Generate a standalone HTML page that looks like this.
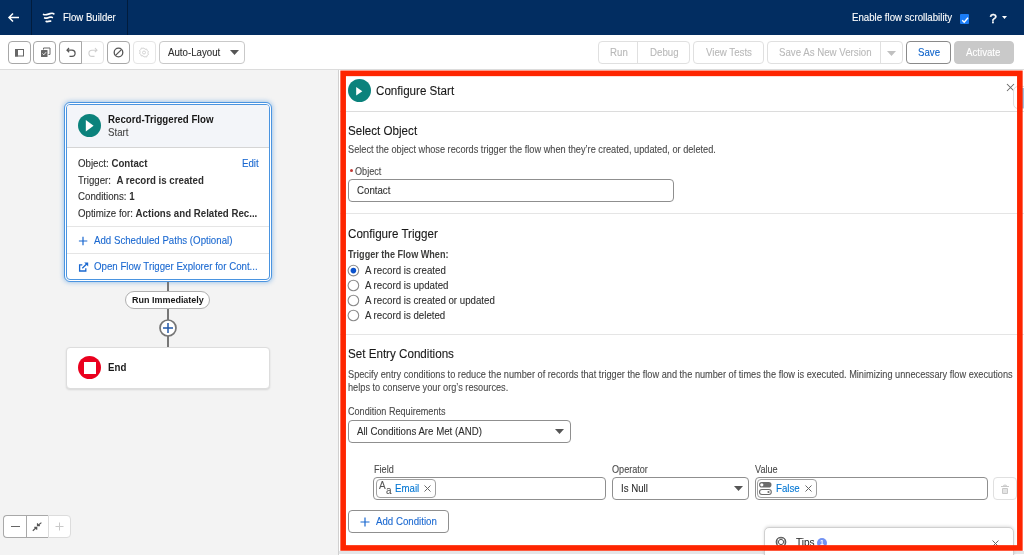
<!DOCTYPE html>
<html><head><meta charset="utf-8">
<style>
*{box-sizing:border-box;margin:0;padding:0}
html,body{width:1024px;height:555px;overflow:hidden;background:#fff;font-family:"Liberation Sans",sans-serif;color:#181818;-webkit-font-smoothing:antialiased}
body{will-change:transform}
.t{-webkit-text-stroke:0.1px currentColor}
b{-webkit-text-stroke:0}
.h{font-size:12.3px!important;transform:scaleX(0.945);transform-origin:0 0}
.a{position:absolute}
.t{position:absolute;white-space:nowrap;line-height:1}
#hdr{left:0;top:0;width:1024px;height:35px;background:#022d61}
#tb{left:0;top:35px;width:1024px;height:35px;background:#fff;border-bottom:1px solid #dcdcdc}
#canvas{left:0;top:70px;width:339px;height:485px;background:#f3f3f3}
#panel{left:338px;top:70px;width:686px;height:485px;background:#fff;border-left:1px solid #d0d0d0}
.btn{position:absolute;top:41px;height:23px;border:1px solid #c9c9c9;border-radius:4px;background:#fff}
.red{position:absolute;left:341px;top:71px;width:681px;height:479px;border:5px solid #fe2500}
.lbl{font-size:9.7px}
.link{color:#1a68d0}
.radio{position:absolute;width:11px;height:11px;border:1px solid #8a8a8a;border-radius:50%;background:#fff}
.inp{position:absolute;border:1px solid #8f8f8f;border-radius:4px;background:#fff;height:22px}
</style></head><body>
<!-- HEADER -->
<div id="hdr" class="a">
  <div class="a" style="left:31px;top:0;width:1px;height:35px;background:#011c3d"></div>
  <div class="a" style="left:127px;top:0;width:1px;height:35px;background:#011c3d"></div>
  <svg class="a" style="left:7px;top:12px" width="13" height="11" viewBox="0 0 13 11"><path d="M12 5.5H2.2M6 1.5L2 5.5l4 4" stroke="#fff" stroke-width="1.5" fill="none"/></svg>
  <svg class="a" style="left:42px;top:10px" width="14" height="14" viewBox="0 0 14 14"><path d="M1.6 4.4C3.5 5.4 5.5 4.3 8 3.6C9.8 3.1 11 3 11.8 3.9M2.7 8C4.5 8.7 6 7.6 7.8 7.2C9 6.9 9.8 7 10.3 7.5M4.2 11.4C5.6 11.9 6.8 11 8.6 11.2" stroke="#fff" stroke-width="1.7" fill="none" stroke-linecap="round"/></svg>
  <div class="t" style="left:63px;top:13px;font-size:10.08px;color:#fff;transform:scaleX(0.952);transform-origin:0 0">Flow Builder</div>
  <div class="t" style="left:852px;top:12.7px;font-size:10.19px;color:#fff;transform:scaleX(0.952);transform-origin:0 0">Enable flow scrollability</div>
  <div class="a" style="left:960px;top:14px;width:9px;height:10px;background:#1a7cf6;border-radius:1px"></div>
  <svg class="a" style="left:959.5px;top:14.5px" width="10" height="10" viewBox="0 0 10 10"><path d="M2.2 5.2L4.2 7.2 8 2.8" stroke="#fff" stroke-width="1.4" fill="none"/></svg>
  <div class="t" style="left:989.5px;top:11.5px;font-size:13px;color:#fff;-webkit-text-stroke:0.45px #fff">?</div>
  <svg class="a" style="left:1002px;top:16px" width="5" height="3" viewBox="0 0 5 3"><path d="M0 0h5L2.5 3z" fill="#fff"/></svg>
</div>
<!-- TOOLBAR -->
<div id="tb" class="a"></div>
<div class="btn" style="left:8px;width:23px;border-color:#a8a8a8"></div>
<svg class="a" style="left:14px;top:48px" width="11" height="10" viewBox="0 0 11 10"><rect x="1.5" y="1.5" width="8" height="6.5" stroke="#666" stroke-width="1" fill="#fff"/><rect x="1" y="1" width="3" height="7.5" fill="#666"/></svg>
<div class="btn" style="left:33px;width:23px;border-color:#a8a8a8"></div>
<svg class="a" style="left:40px;top:47px" width="11" height="11" viewBox="0 0 11 11"><path d="M3.5 2.5V1h6.5v6.5H8.5" stroke="#666" stroke-width="1" fill="none"/><rect x="1" y="3" width="6.5" height="7" rx="0.5" fill="#666"/><path d="M2.5 6.5l1.3 1.3 2.3-2.6" stroke="#fff" stroke-width="0.9" fill="none"/></svg>
<div class="btn" style="left:59px;width:45px;border-color:#e3e3e3"></div>
<div class="a" style="left:59px;top:41px;width:23px;height:23px;border:1px solid #a8a8a8;border-radius:4px 0 0 4px"></div>
<svg class="a" style="left:66px;top:47px" width="11" height="11" viewBox="0 0 11 11"><path d="M3 1L1 3.2 3.2 5.2M1.2 3.2H6a3 3 0 0 1 0 6.2H3.5" stroke="#555" stroke-width="1.2" fill="none"/></svg>
<svg class="a" style="left:87px;top:47px" width="11" height="11" viewBox="0 0 11 11"><path d="M8 1l2 2.2L7.8 5.2M9.8 3.2H5a3 3 0 0 0 0 6.2h2.5" stroke="#cfcfcf" stroke-width="1.1" fill="none"/></svg>
<div class="btn" style="left:107px;width:23px;border-color:#a8a8a8"></div>
<svg class="a" style="left:113px;top:47px" width="11" height="11" viewBox="0 0 11 11"><circle cx="5.5" cy="5.5" r="4.3" stroke="#555" stroke-width="1.3" fill="none"/><path d="M2.6 8.4L8.4 2.6" stroke="#555" stroke-width="1.3"/></svg>
<div class="btn" style="left:133px;width:23px;border-color:#e5e5e5"></div>
<svg class="a" style="left:139px;top:47px" width="10" height="11" viewBox="0 0 10 11"><path d="M5 1l1 1.3 1.7-.3.4 1.6 1.4.9-.7 1.5.7 1.5-1.4.9-.4 1.6-1.7-.3L5 10l-1-1.3-1.7.3-.4-1.6-1.4-.9.7-1.5-.7-1.5 1.4-.9.4-1.6 1.7.3z" stroke="#cfcfcf" stroke-width="0.9" fill="none"/><circle cx="5" cy="5.5" r="1.5" stroke="#cfcfcf" stroke-width="0.9" fill="none"/></svg>
<div class="btn" style="left:159px;width:86px"></div>
<div class="t" style="left:168px;top:48.2px;font-size:10.19px;color:#2e2e2e;transform:scaleX(0.952);transform-origin:0 0">Auto-Layout</div>
<svg class="a" style="left:230px;top:50px" width="9" height="5" viewBox="0 0 9 5"><path d="M0 0h9L4.5 5z" fill="#555"/></svg>
<!-- right toolbar -->
<div class="btn" style="left:598px;width:92px;border-color:#e0e0e0"></div>
<div class="a" style="left:637px;top:41px;width:1px;height:23px;background:#e0e0e0"></div>
<div class="t" style="left:610px;top:48.2px;font-size:10.19px;color:#b8b8b8;transform:scaleX(0.952);transform-origin:0 0">Run</div>
<div class="t" style="left:650px;top:48.2px;font-size:10.19px;color:#b8b8b8;transform:scaleX(0.952);transform-origin:0 0">Debug</div>
<div class="btn" style="left:693px;width:71px;border-color:#e0e0e0"></div>
<div class="t" style="left:706px;top:48.2px;font-size:10.19px;color:#b8b8b8;transform:scaleX(0.952);transform-origin:0 0">View Tests</div>
<div class="btn" style="left:767px;width:136px;border-color:#e0e0e0"></div>
<div class="a" style="left:880px;top:41px;width:1px;height:23px;background:#e0e0e0"></div>
<div class="t" style="left:779px;top:48.2px;font-size:10.19px;color:#b8b8b8;transform:scaleX(0.952);transform-origin:0 0">Save As New Version</div>
<svg class="a" style="left:887px;top:51px" width="9" height="5" viewBox="0 0 9 5"><path d="M0 0h9L4.5 5z" fill="#c0c0c0"/></svg>
<div class="btn" style="left:906px;width:45px;border-color:#8a8a8a"></div>
<div class="t" style="left:918px;top:48.2px;font-size:10.19px;color:#0d62c9;transform:scaleX(0.952);transform-origin:0 0">Save</div>
<div class="btn" style="left:954px;width:60px;border-color:#c9c9c9;background:#c9c9c9"></div>
<div class="t" style="left:966px;top:48.2px;font-size:10.19px;color:#fff;transform:scaleX(0.952);transform-origin:0 0">Activate</div>
<!-- CANVAS -->
<div id="canvas" class="a"></div>
<!-- start card -->
<div class="a" style="left:64px;top:102px;width:208px;height:180px;border:1px solid #4a94e0;border-radius:6px;background:#fff;box-shadow:0 0 4px 1px rgba(74,148,224,.45)"></div>
<div class="a" style="left:66px;top:104px;width:204px;height:176px;border:1px solid #4a94e0;border-radius:4px;background:#fff;overflow:hidden">
  <div class="a" style="left:0;top:0;width:202px;height:43px;background:#f3f5f9;border-bottom:1px solid #d5d5d5"></div>
  <div class="a" style="left:0;top:121px;width:202px;height:1px;background:#e5e5e5"></div>
  <div class="a" style="left:0;top:148px;width:202px;height:1px;background:#e5e5e5"></div>
</div>
<div class="a" style="left:78px;top:114px;width:23px;height:23px;border-radius:50%;background:#0b827c"></div>
<svg class="a" style="left:78px;top:114px" width="23" height="23" viewBox="0 0 23 23"><path d="M7.8 6L15.6 11.8 7.8 17.6z" fill="#fff"/></svg>
<div class="t" style="left:108px;top:114.18px;font-size:10.67px;font-weight:bold;color:#181818;transform:scaleX(0.9091);transform-origin:0 0;-webkit-text-stroke:0">Record-Triggered Flow</div>
<div class="t" style="left:108px;top:127.18px;font-size:10.67px;color:#444;transform:scaleX(0.9091);transform-origin:0 0">Start</div>
<div class="t" style="left:78px;top:158.18px;font-size:10.67px;color:#2e2e2e;transform:scaleX(0.9091);transform-origin:0 0">Object: <b>Contact</b></div>
<div class="t" style="left:242px;top:158.18px;font-size:10.67px;color:#1a68d0;transform:scaleX(0.9091);transform-origin:0 0">Edit</div>
<div class="t" style="left:78px;top:175.18px;font-size:10.67px;color:#2e2e2e;transform:scaleX(0.9091);transform-origin:0 0">Trigger:&nbsp; <b>A record is created</b></div>
<div class="t" style="left:78px;top:191.18px;font-size:10.67px;color:#2e2e2e;transform:scaleX(0.9091);transform-origin:0 0">Conditions: <b>1</b></div>
<div class="t" style="left:78px;top:208.18px;font-size:10.67px;color:#2e2e2e;transform:scaleX(0.9091);transform-origin:0 0">Optimize for: <b>Actions and Related Rec...</b></div>
<svg class="a" style="left:78px;top:236px" width="10" height="10" viewBox="0 0 10 10"><path d="M5 0.7v8.6M0.9 5h8.4" stroke="#1a68d0" stroke-width="1.2"/></svg>
<div class="t" style="left:94px;top:235.18px;font-size:10.67px;color:#1a68d0;transform:scaleX(0.9091);transform-origin:0 0">Add Scheduled Paths (Optional)</div>
<svg class="a" style="left:78px;top:261px" width="11" height="11" viewBox="0 0 11 11"><path d="M4.3 3.8H1.6V10H7.8V7.2" stroke="#1a68d0" stroke-width="1.3" fill="none"/><path d="M4.3 7.3L8.6 3" stroke="#1a68d0" stroke-width="1.3"/><path d="M6.2 1.4H10.2V5.4z" fill="#1a68d0"/></svg>
<div class="t" style="left:94px;top:261.18px;font-size:10.67px;color:#1a68d0;transform:scaleX(0.9091);transform-origin:0 0">Open Flow Trigger Explorer for Cont...</div>
<!-- connector -->
<div class="a" style="left:167px;top:282px;width:2px;height:66px;background:#777"></div>
<div class="a" style="left:125px;top:291px;width:85px;height:18px;border:1px solid #b0b0b0;border-radius:9px;background:#fff"></div>
<div class="t" style="left:132px;top:295.24px;font-size:9.9px;font-weight:bold;color:#181818;transform:scaleX(0.9091);transform-origin:0 0;-webkit-text-stroke:0">Run Immediately</div>
<svg class="a" style="left:158px;top:318px" width="20" height="20" viewBox="0 0 20 20"><circle cx="10" cy="10" r="8" stroke="#757575" stroke-width="1.7" fill="#fff"/><path d="M10 5v10M5 10h10" stroke="#2358a8" stroke-width="1.5"/></svg>
<!-- end card -->
<div class="a" style="left:66px;top:347px;width:204px;height:42px;background:#fff;border-radius:4px;border:1px solid #dddddd;box-shadow:0 1px 2px rgba(0,0,0,.12)"></div>
<div class="a" style="left:78px;top:356px;width:23px;height:23px;border-radius:50%;background:#ea001e"></div>
<div class="a" style="left:84px;top:362px;width:12px;height:12px;background:#fff"></div>
<div class="t" style="left:108px;top:362.2px;font-size:10.67px;font-weight:bold;color:#181818;transform:scaleX(0.9091);transform-origin:0 0;-webkit-text-stroke:0">End</div>
<!-- zoom controls -->
<div class="a" style="left:48px;top:515px;width:23px;height:23px;border:1px solid #dcdcdc;border-radius:0 4px 4px 0;background:#fff"></div>
<div class="a" style="left:3px;top:515px;width:45px;height:23px;border:1px solid #a8a8a8;border-right:none;border-radius:4px 0 0 4px;background:#fff"></div>
<div class="a" style="left:26px;top:515px;width:1px;height:23px;background:#a8a8a8"></div>
<div class="a" style="left:11px;top:526px;width:9px;height:1.2px;background:#666"></div>
<svg class="a" style="left:32px;top:520px" width="12" height="12" viewBox="0 0 12 12"><path d="M0.8 10.8L4.7 7.3M2.3 7.3H4.7V9.7M9.4 2.6L5.5 5.7M5.5 3.3V5.7H7.9" stroke="#555" stroke-width="1.2" fill="none"/></svg>
<svg class="a" style="left:54px;top:521px" width="11" height="11" viewBox="0 0 11 11"><path d="M5.5 1.5v8M1.5 5.5h8" stroke="#c9c9c9" stroke-width="1"/></svg>
<!-- PANEL -->
<div id="panel" class="a"></div>
<div class="a" style="left:340px;top:111px;width:684px;height:1px;background:#dcdcdc"></div>
<div class="a" style="left:348px;top:79px;width:23px;height:23px;border-radius:50%;background:#0b827c"></div>
<svg class="a" style="left:348px;top:79px" width="23" height="23" viewBox="0 0 23 23"><path d="M8.2 8L14.3 12.2 8.2 16.5z" fill="#fff"/></svg>
<div class="t h" style="left:376px;top:85px;font-size:11.8px;color:#181818">Configure Start</div>
<svg class="a" style="left:1006px;top:83px" width="9" height="9" viewBox="0 0 9 9"><path d="M1 1l7 7M8 1L1 8" stroke="#666" stroke-width="1.05"/></svg>
<!-- Select Object -->
<div class="t h" style="left:348px;top:124.5px;font-size:11.6px;color:#181818">Select Object</div>
<div class="t" style="left:348px;top:145.22px;font-size:10.12px;color:#4a4a4a;transform:scaleX(0.9091);transform-origin:0 0">Select the object whose records trigger the flow when they’re created, updated, or deleted.</div>
<div class="a" style="left:350px;top:169px;width:3px;height:3px;border-radius:50%;background:#c23934"></div>
<div class="t" style="left:355px;top:167.23px;font-size:10.01px;color:#4a4a4a;transform:scaleX(0.9091);transform-origin:0 0">Object</div>
<div class="inp" style="left:348px;top:179px;width:326px;height:23px"></div>
<div class="t" style="left:357px;top:185.18px;font-size:10.67px;color:#2e2e2e;transform:scaleX(0.9091);transform-origin:0 0">Contact</div>
<div class="a" style="left:340px;top:213px;width:684px;height:1px;background:#e5e5e5"></div>
<!-- Configure Trigger -->
<div class="t h" style="left:348px;top:227.5px;font-size:11.6px;color:#181818">Configure Trigger</div>
<div class="t" style="left:348px;top:250.23px;font-size:10.01px;font-weight:bold;color:#3e3e3c;transform:scaleX(0.9091);transform-origin:0 0;-webkit-text-stroke:0">Trigger the Flow When:</div>
<svg class="a" style="left:346px;top:263px" width="16" height="16" viewBox="0 0 16 16"><circle cx="7.4" cy="7.6" r="5.3" stroke="#8c8c8c" stroke-width="1.1" fill="#fff"/><circle cx="7.4" cy="7.6" r="2.8" fill="#0b52cc"/></svg>
<div class="t" style="left:365px;top:265.18px;font-size:10.67px;color:#2e2e2e;transform:scaleX(0.9091);transform-origin:0 0">A record is created</div>
<svg class="a" style="left:346px;top:278px" width="16" height="16" viewBox="0 0 16 16"><circle cx="7.4" cy="7.5" r="5.3" stroke="#8c8c8c" stroke-width="1.1" fill="#fff"/></svg>
<div class="t" style="left:365px;top:280.18px;font-size:10.67px;color:#2e2e2e;transform:scaleX(0.9091);transform-origin:0 0">A record is updated</div>
<svg class="a" style="left:346px;top:293px" width="16" height="16" viewBox="0 0 16 16"><circle cx="7.4" cy="7.5" r="5.3" stroke="#8c8c8c" stroke-width="1.1" fill="#fff"/></svg>
<div class="t" style="left:365px;top:295.18px;font-size:10.67px;color:#2e2e2e;transform:scaleX(0.9091);transform-origin:0 0">A record is created or updated</div>
<svg class="a" style="left:346px;top:308px" width="16" height="16" viewBox="0 0 16 16"><circle cx="7.4" cy="7.5" r="5.3" stroke="#8c8c8c" stroke-width="1.1" fill="#fff"/></svg>
<div class="t" style="left:365px;top:310.18px;font-size:10.67px;color:#2e2e2e;transform:scaleX(0.9091);transform-origin:0 0">A record is deleted</div>
<div class="a" style="left:340px;top:334px;width:684px;height:1px;background:#e5e5e5"></div>
<!-- Set Entry Conditions -->
<div class="t h" style="left:348px;top:347.5px;font-size:11.6px;color:#181818">Set Entry Conditions</div>
<div class="t" style="left:348px;top:370.22px;font-size:10.12px;color:#4a4a4a;transform:scaleX(0.9091);transform-origin:0 0">Specify entry conditions to reduce the number of records that trigger the flow and the number of times the flow is executed. Minimizing unnecessary flow executions</div>
<div class="t" style="left:348px;top:383.22px;font-size:10.12px;color:#4a4a4a;transform:scaleX(0.9091);transform-origin:0 0">helps to conserve your org’s resources.</div>
<div class="t" style="left:348px;top:407.23px;font-size:10.01px;color:#4a4a4a;transform:scaleX(0.9091);transform-origin:0 0">Condition Requirements</div>
<div class="inp" style="left:348px;top:420px;width:223px;height:23px"></div>
<div class="t" style="left:357px;top:426.18px;font-size:10.67px;color:#2e2e2e;transform:scaleX(0.9091);transform-origin:0 0">All Conditions Are Met (AND)</div>
<svg class="a" style="left:555px;top:429px" width="9" height="5" viewBox="0 0 9 5"><path d="M0 0h9L4.5 5z" fill="#555"/></svg>
<!-- condition row -->
<div class="t" style="left:374px;top:465.23px;font-size:10.01px;color:#4a4a4a;transform:scaleX(0.9091);transform-origin:0 0">Field</div>
<div class="inp" style="left:373px;top:477px;width:233px;height:23px"></div>
<div class="a" style="left:376px;top:479px;width:60px;height:19px;border:1px solid #a0a0a0;border-radius:4px;background:#fff"></div>
<div class="t" style="left:379px;top:480.15px;font-size:11.0px;color:#555;transform:scaleX(0.9091);transform-origin:0 0">A</div>
<div class="t" style="left:386px;top:485.15px;font-size:11.0px;color:#555;transform:scaleX(0.9091);transform-origin:0 0">a</div>
<div class="t" style="left:395px;top:483.18px;font-size:10.67px;color:#0176d3;transform:scaleX(0.9091);transform-origin:0 0">Email</div>
<svg class="a" style="left:423px;top:484px" width="9" height="9" viewBox="0 0 9 9"><path d="M1.5 1.5l6 6M7.5 1.5l-6 6" stroke="#666" stroke-width="1"/></svg>
<div class="t" style="left:612px;top:465.23px;font-size:10.01px;color:#4a4a4a;transform:scaleX(0.9091);transform-origin:0 0">Operator</div>
<div class="inp" style="left:612px;top:477px;width:137px;height:23px"></div>
<div class="t" style="left:621px;top:483.18px;font-size:10.67px;color:#2e2e2e;transform:scaleX(0.9091);transform-origin:0 0">Is Null</div>
<svg class="a" style="left:734px;top:486px" width="9" height="5" viewBox="0 0 9 5"><path d="M0 0h9L4.5 5z" fill="#555"/></svg>
<div class="t" style="left:755px;top:465.23px;font-size:10.01px;color:#4a4a4a;transform:scaleX(0.9091);transform-origin:0 0">Value</div>
<div class="inp" style="left:755px;top:477px;width:233px;height:23px"></div>
<div class="a" style="left:757px;top:479px;width:60px;height:19px;border:1px solid #a0a0a0;border-radius:4px;background:#fff"></div>
<svg class="a" style="left:758px;top:481px" width="15" height="15" viewBox="0 0 15 15"><rect x="1" y="1" width="12.5" height="5.6" rx="2.8" fill="#6b6b6b"/><circle cx="3.8" cy="3.8" r="1.6" fill="#fff"/><rect x="1.5" y="8.5" width="11.8" height="5" rx="2.5" fill="#fff" stroke="#6b6b6b" stroke-width="1.1"/><circle cx="10.5" cy="11" r="1.1" fill="#6b6b6b"/></svg>
<div class="t" style="left:776px;top:483.18px;font-size:10.67px;color:#0176d3;transform:scaleX(0.9091);transform-origin:0 0">False</div>
<svg class="a" style="left:804px;top:484px" width="9" height="9" viewBox="0 0 9 9"><path d="M1.5 1.5l6 6M7.5 1.5l-6 6" stroke="#666" stroke-width="1"/></svg>
<div class="a" style="left:993px;top:477px;width:24px;height:23px;border:1px solid #e0e0e0;border-radius:4px;background:#fff"></div>
<svg class="a" style="left:1000px;top:482px" width="12" height="13" viewBox="0 0 12 13"><path d="M1 4.5h8M3.5 4.5a1.5 1.5 0 0 1 3 0" stroke="#c8c8c8" stroke-width="1.1" fill="none"/><rect x="2" y="6" width="6" height="6" rx="1" fill="#c8c8c8"/><rect x="3.5" y="7" width="1" height="4" fill="#fff"/><rect x="5.5" y="7" width="1" height="4" fill="#fff"/></svg>
<!-- add condition -->
<div class="a" style="left:348px;top:510px;width:101px;height:23px;border:1px solid #8f8f8f;border-radius:4px;background:#fff"></div>
<svg class="a" style="left:360px;top:517px" width="10" height="10" viewBox="0 0 10 10"><path d="M5 0.5v9M0.5 5h9" stroke="#1a68d0" stroke-width="1.2"/></svg>
<div class="t" style="left:376px;top:516.18px;font-size:10.67px;color:#1a68d0;transform:scaleX(0.9091);transform-origin:0 0">Add Condition</div>
<div class="a" style="left:339px;top:551px;width:685px;height:3px;background:#e4e6e8"></div>
<!-- tips -->
<div class="a" style="left:764px;top:527px;width:250px;height:40px;border:1px solid #d0d0d0;border-radius:5px;background:#fff;box-shadow:0 -1px 3px rgba(0,0,0,.12)"></div>
<svg class="a" style="left:775px;top:536px" width="12" height="12" viewBox="0 0 12 12"><circle cx="6" cy="6" r="4.8" stroke="#555" stroke-width="1.1" fill="none"/><circle cx="6" cy="6" r="2.6" stroke="#555" stroke-width="1" fill="none"/><path d="M3.5 2h5M3.5 10h5M2 3.5v5M10 3.5v5" stroke="#555" stroke-width="0.9"/></svg>
<div class="t" style="left:796px;top:537.15px;font-size:11.0px;color:#2e2e2e;transform:scaleX(0.9091);transform-origin:0 0">Tips</div>
<div class="a" style="left:817px;top:538px;width:10px;height:10px;border-radius:50%;background:#7393f3"></div>
<div class="t" style="left:820px;top:539.41px;font-size:7.7px;font-weight:bold;color:#fff;transform:scaleX(0.9091);transform-origin:0 0;-webkit-text-stroke:0">1</div>
<svg class="a" style="left:991px;top:539px" width="9" height="9" viewBox="0 0 9 9"><path d="M1.5 1.5l6 6M7.5 1.5l-6 6" stroke="#666" stroke-width="1"/></svg>
<div class="a" style="left:1013px;top:86px;width:20px;height:23px;border:1px solid #dedede;border-radius:5px;background:#fff"></div>
<div class="a" style="left:1022px;top:88px;width:2px;height:20px;background:#9ec0de"></div>
<svg class="a" style="left:0;top:0" width="1024" height="555"><rect x="343.15" y="73.35" width="676.7" height="474.6" stroke="#fe2500" stroke-width="5.6" fill="none"/></svg>
</body></html>
